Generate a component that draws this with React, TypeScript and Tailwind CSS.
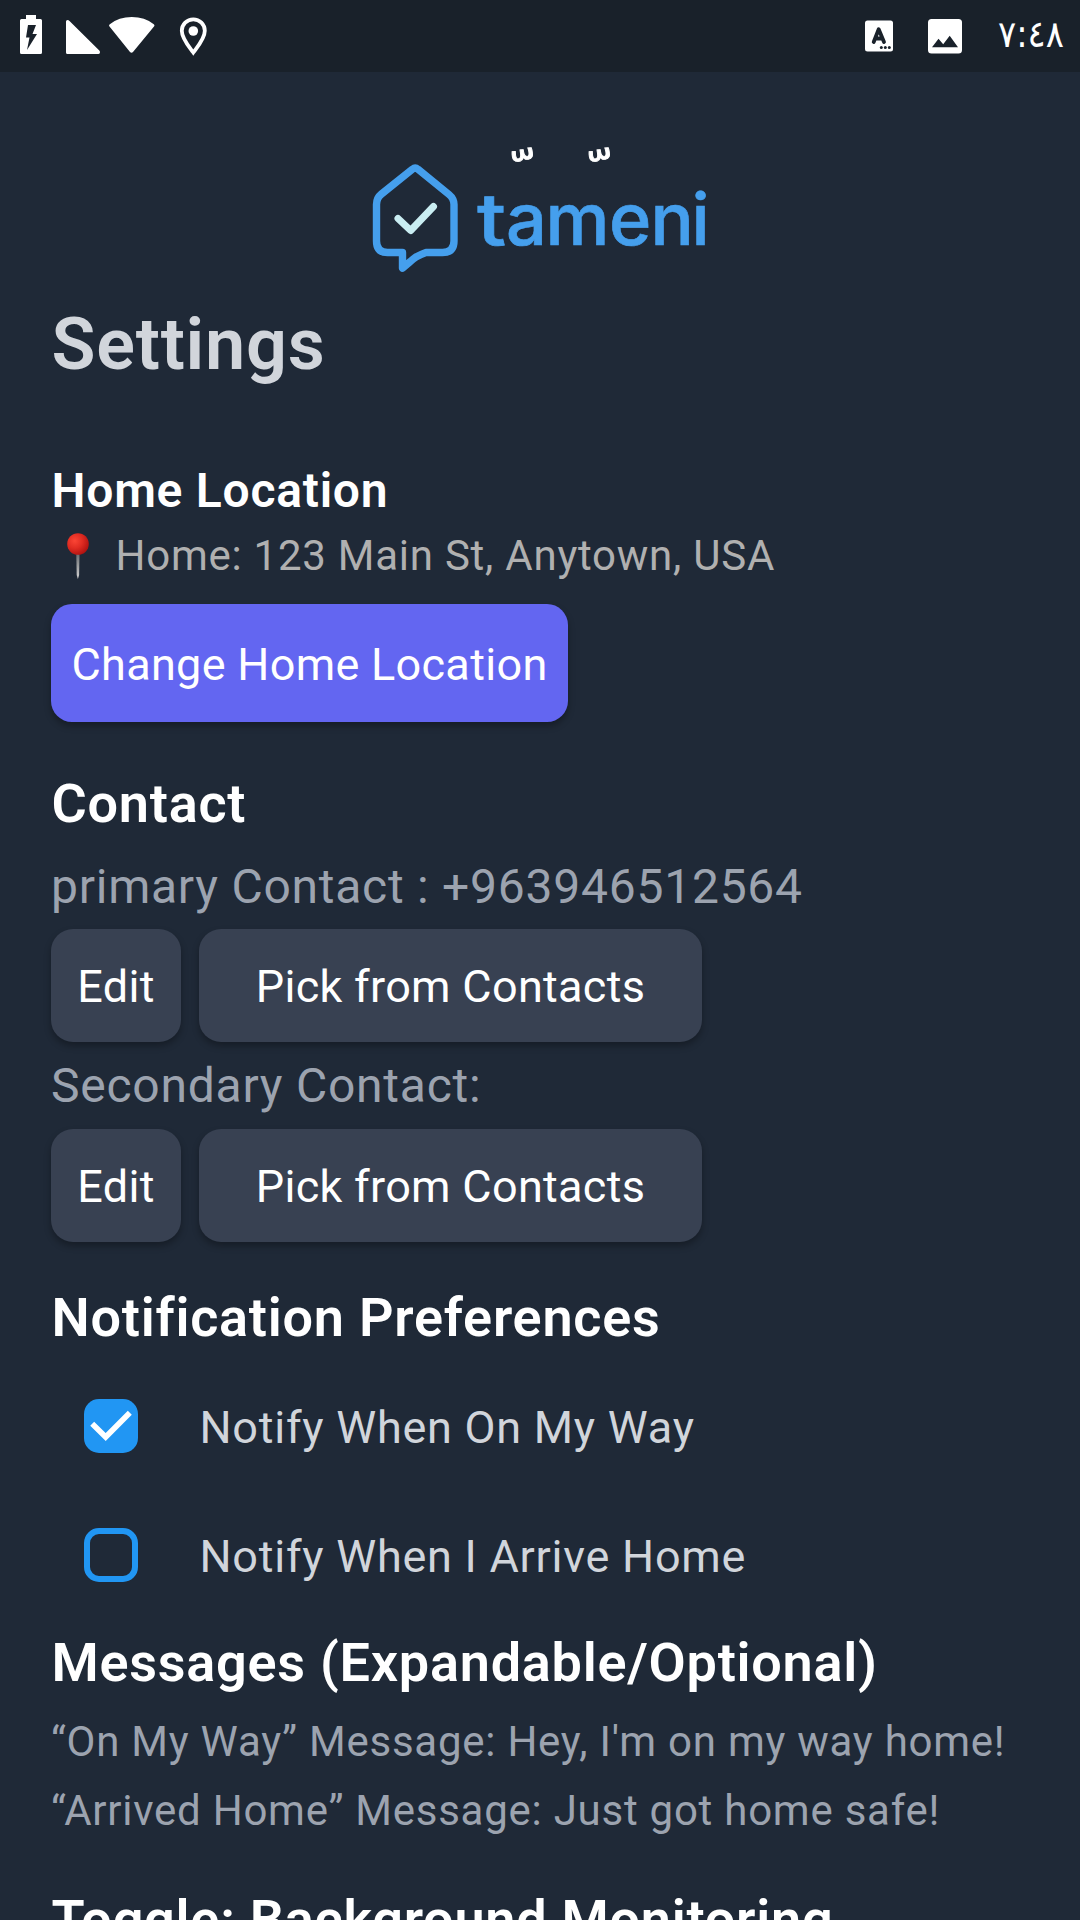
import React from 'react';

type LineProps = { className: string; children: React.ReactNode };

const Line = ({ className, children }: LineProps) => (
  <p className={'whitespace-nowrap ' + className}>{children}</p>
);

const Section = ({ className, children }: LineProps) => (
  <h2 className={'pl-[0.5px] whitespace-nowrap text-[54px] leading-[63px] font-semibold ' + className}>{children}</h2>
);

function StatusBar() {
  return (
    <header className="flex h-[72px] items-start bg-[#19212a]">
      <svg width="240" height="72" viewBox="0 0 240 72" fill="#fff">
        <path d="M26 15h10v4h4.500q1.500 0 1.500 1.500v32q0 1.500-1.500 1.500h-19q-1.500 0-1.500-1.500v-32q0-1.500 1.500-1.500h4.500z" />
        <path d="M28 25h8l-3.500 9h4.500l-10 16 2.500-12.500h-3.500z" fill="#19212a" />
        <path d="M66 21.500q0-1.500 1.500-1.500 1 0 2 1l29.800 29.500q.7.700.7 1.800 0 1.700-1.500 1.700h-31q-1.500 0-1.500-1.500z" />
        <path d="M109.300 26.300q-.8-1.200.5-2.100 9-7.200 22-7.200t22 7.200q1.200.9.400 2.100l-21.200 25.800q-1.500 1.500-3 0z" />
        <path d="M193.300 52.500c-3.500-5-11.500-13.500-11.500-21.700a11.500 11.500 0 0 1 23 0c0 8.200-8 16.700-11.500 21.700z" fill="none" stroke="#fff" strokeWidth="3.800" />
        <circle cx="193.300" cy="31" r="4.800" />
      </svg>
      <div className="flex-1" />
      <svg width="240" height="72" viewBox="0 0 240 72">
        <rect x="25" y="20.500" width="28" height="31" rx="2.500" fill="#fff" />
        <path d="M33.700 42L38.700 29.200L44 42M35.500 38.500H42" fill="none" stroke="#19212a" strokeWidth="3.800" strokeLinecap="round" strokeLinejoin="round" />
        <g fill="#19212a">
          <circle cx="41.300" cy="47.600" r="1.500" />
          <circle cx="45.300" cy="47.600" r="1.500" />
          <circle cx="49.300" cy="47.600" r="1.500" />
        </g>
        <rect x="88" y="19" width="34" height="34.500" rx="3.500" fill="#fff" />
        <path d="M92 47.200l6.500-8.500 4.700 5.600 6.500-8.500 8.300 11.400z" fill="#19212a" />
        <text x="158" y="46.500" fontSize="37" fontFamily="DejaVu Sans" fill="#fff" direction="ltr" textLength="66" lengthAdjust="spacingAndGlyphs">٧:٤٨</text>
      </svg>
    </header>
  );
}

const Shadda = ({ x }: { x: number }) => (
  <g transform={`translate(${x} 24.500) rotate(-3) skewX(6) scale(1.2 .88)`}>
    <text x="-7.900" y="41.600" fontFamily="DejaVu Sans" fontSize="56" fill="#fff" stroke="#fff" strokeWidth=".8">ﹼ</text>
  </g>
);

function Logo() {
  return (
    <svg className="self-center" width="360" height="160" viewBox="0 0 360 160">
      <path
        d="M52.500 39.200q2.700-2.300 5.400 0L89 64.500q5 4.200 5 10V111q0 11.500-11.500 11.500H66q-4.500 1.500-9.500 4.200-3.500 2.300-6.300 5l-7.700 6.500V122.500H27.500Q16.500 122.500 16.500 111V74.500q0-6.500 5-10.500z"
        fill="none" stroke="#459fed" strokeWidth="7.400" strokeLinejoin="round"
      />
      <path d="M38 88.500l12.700 12L73.500 76.500" fill="none" stroke="#c9edf2" strokeWidth="7" strokeLinecap="round" strokeLinejoin="round" />
      <g fontSize="72" fontWeight="500" fontFamily="Inter" fill="#459fed" stroke="#459fed" strokeWidth=".7">
        <text x="117" y="114.700" textLength="30" lengthAdjust="spacingAndGlyphs">t</text>
        <text x="146 185.500 249 290.500 331.500" y="114.700">ameni</text>
      </g>
      <Shadda x={162} />
      <Shadda x={239} />
    </svg>
  );
}

const Pin = () => (
  <svg className="ml-[16px]" role="img" aria-label="📍" width="22" height="48" viewBox="0 0 22 48">
    <defs>
      <radialGradient id="pinHead" cx=".35" cy=".35" r=".7">
        <stop offset="0" stopColor="#fb4535" />
        <stop offset=".5" stopColor="#e02c22" />
        <stop offset="1" stopColor="#b01210" />
      </radialGradient>
      <linearGradient id="pinNeedle" x1="0" y1="0" x2="0" y2="1">
        <stop offset="0" stopColor="#66696d" />
        <stop offset="1" stopColor="#d5d5d5" />
      </linearGradient>
    </defs>
    <path d="M9.300 21h3.200l-.4 22-1.200 4-1.200-4z" fill="url(#pinNeedle)" />
    <circle cx="11" cy="12" r="10.800" fill="url(#pinHead)" />
  </svg>
);

const darkButton =
  'flex h-[113px] items-center justify-center rounded-[22px] bg-[#384152] pt-[2px] text-[45px] tracking-[0.3px] shadow-[0_4px_7px_rgba(0,0,0,0.3)] whitespace-nowrap';

const ContactButtons = () => (
  <div className="flex gap-[18px]">
    <button className={darkButton + ' w-[130px]'}>Edit</button>
    <button className={darkButton + ' w-[503px]'}>Pick from Contacts</button>
  </div>
);

const Checkbox = ({ label, checked }: { label: string; checked: boolean }) => (
  <div className="flex h-[129px] items-start pt-[38px] pl-[33px]">
    {checked ? (
      <div className="size-[54px] rounded-[15px] bg-[#2196f3]">
        <svg width="54" height="54" viewBox="0 0 54 54">
          <path d="M8.200 24.800l13.500 13.200L45.800 13.800" fill="none" stroke="#fff" strokeWidth="5.600" />
        </svg>
      </div>
    ) : (
      <div className="size-[54px] rounded-[15px] border-6 border-[#2196f3]" />
    )}
    <Line className="mt-[2px] ml-[61.5px] text-[45px] leading-[53px] text-[#d1d5db]">{label}</Line>
  </div>
);

export default function App() {
  return (
    <div className="h-[1920px] w-[1080px] overflow-hidden bg-[#1f2937] font-['Roboto',sans-serif] tracking-[0.75px] text-white">
      <StatusBar />
      <main className="flex flex-col items-stretch px-[51px] pt-[58px]">
        <Logo />
        <h1 className="mt-[12px] pl-[0.5px] text-[72px] leading-[85px] font-semibold text-[#d1d5db]">Settings</h1>
        <h2 className="mt-[75px] pl-[0.5px] text-[48px] leading-[57px] font-semibold">Home Location</h2>
        <div className="mt-[8px] flex h-[57px] items-center">
          <Pin />
          <Line className="ml-[26.5px] text-[42px] leading-[57px] text-[#b0b0b0]">Home: 123 Main St, Anytown, USA</Line>
        </div>
        <button className="mt-[20px] flex h-[118px] w-[517px] items-center justify-center self-start rounded-[21px] bg-[#6366f1] pt-[3px] text-[45px] tracking-[0.3px] whitespace-nowrap shadow-[0_4px_7px_rgba(0,0,0,0.3)]">
          Change Home Location
        </button>
        <Section className="mt-[50px]">Contact</Section>
        <Line className="mt-[23px] text-[48px] leading-[57px] text-[#9ca3af]">primary Contact : +963946512564</Line>
        <div className="mt-[14px]"><ContactButtons /></div>
        <Line className="mt-[15px] text-[48px] leading-[57px] text-[#9ca3af]">Secondary Contact:</Line>
        <div className="mt-[15px]"><ContactButtons /></div>
        <Section className="mt-[44px]">Notification Preferences</Section>
        <div className="mt-[12px]">
          <Checkbox label="Notify When On My Way" checked />
          <Checkbox label="Notify When I Arrive Home" checked={false} />
        </div>
        <Section className="mt-[12px]">Messages (Expandable/Optional)</Section>
        <Line className="mt-[23px] text-[42px] leading-[49px] text-[#9ca3af]">“On My Way” Message: Hey, I'm on my way home!</Line>
        <Line className="mt-[20px] text-[42px] leading-[49px] text-[#9ca3af]">“Arrived Home” Message: Just got home safe!</Line>
        <Section className="mt-[53px]">Toggle: Background Monitoring</Section>
      </main>
    </div>
  );
}
